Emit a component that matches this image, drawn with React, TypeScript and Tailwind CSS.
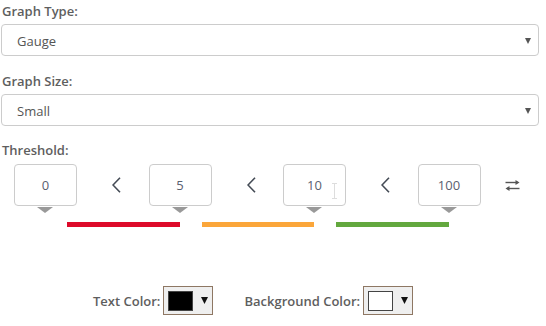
import React from "react";

const font = { fontFamily: '"Open Sans", "Liberation Sans", sans-serif' };

function SelectBox({ value }: { value: string }) {
  return (
    <div className="relative h-[32px] w-full rounded-[4px] border border-[#cccccc] bg-white flex items-center pl-[15px]">
      <span className="text-[13px] leading-[18px] text-[#555555] mt-[1px]">{value}</span>
      <svg className="absolute right-[7px] top-[13px]" width="6" height="6" viewBox="0 0 6 6">
        <polygon points="0,0 6,0 3,6" fill="#555555" />
      </svg>
    </div>
  );
}

function ThreshBox({ value, cursor }: { value: string; cursor?: boolean }) {
  return (
    <div className="relative w-[63px] h-[42px] shrink-0 rounded-[4px] border border-[#cccccc] bg-white flex items-center justify-center">
      <span className="text-[13px] leading-[18px] text-[#5a6070]">{value}</span>
      {cursor && (
        <svg className="absolute left-[47px] top-[18px]" width="7" height="16" viewBox="0 0 7 16">
          <path d="M1 0.5h5M1 15.5h5M3.5 0.5v15" stroke="#dddddd" strokeWidth="1" fill="none" />
        </svg>
      )}
      <div className="absolute left-[22px] top-[42px] w-0 h-0 border-l-[8px] border-r-[8px] border-t-[6px] border-l-transparent border-r-transparent border-t-[#999999]" />
    </div>
  );
}

function Chevron() {
  return (
    <div className="w-[71.5px] shrink-0 flex items-center pl-[35px]">
      <svg width="9" height="16" viewBox="0 0 9 16">
        <polyline points="8,0.8 1,8 8,15.2" fill="none" stroke="#444b55" strokeWidth="1.6" />
      </svg>
    </div>
  );
}

function Swatch({ color }: { color: string }) {
  return (
    <div className="w-[50px] h-[29px] border border-[#8e7763] bg-[#efefef] flex items-center pl-[4px] gap-[8px]">
      <div className="w-[25px] h-[20px] border border-[#444444]" style={{ backgroundColor: color }} />
      <svg width="7" height="7" viewBox="0 0 7 7">
        <polygon points="0,0 7,0 3.5,7" fill="#111111" />
      </svg>
    </div>
  );
}

export default function App() {
  return (
    <div className="w-[546px] h-[326px] bg-white relative overflow-hidden" style={font}>
      <div className="w-[538px] ml-[1px] pt-[2px]">
        <div className="text-[13px] leading-[18px] font-semibold text-[#5e5e5e] ml-[1px]">Graph Type:</div>
        <div className="mt-[4px]">
          <SelectBox value="Gauge" />
        </div>
        <div className="mt-[16px] text-[13px] leading-[18px] font-semibold text-[#5e5e5e] ml-[1px]">Graph Size:</div>
        <div className="mt-[4px]">
          <SelectBox value="Small" />
        </div>
        <div className="mt-[15px] text-[13px] leading-[18px] font-semibold text-[#5e5e5e] ml-[1px]">Threshold:</div>
      </div>

      <div className="mt-[5px] flex items-center pl-[14px]">
        <ThreshBox value="0" />
        <Chevron />
        <ThreshBox value="5" />
        <Chevron />
        <ThreshBox value="10" cursor />
        <Chevron />
        <ThreshBox value="100" />
        <div className="pl-[24px] flex items-center">
          <svg width="15" height="11" viewBox="0 0 15 11">
            <path d="M0.5 2.5h12.5" stroke="#555555" strokeWidth="1.4" />
            <polygon points="14.5,2.5 10.5,0 10.5,5" fill="#555555" />
            <path d="M2 8.5h12.5" stroke="#555555" strokeWidth="1.4" />
            <polygon points="0.5,8.5 4.5,6 4.5,11" fill="#555555" />
          </svg>
        </div>
      </div>

      <div className="mt-[16px] flex pl-[67px] gap-[22px]">
        <div className="w-[113px] h-[5px] bg-[#dd0a2a]" />
        <div className="w-[112px] h-[5px] bg-[#fba63a]" />
        <div className="w-[113px] h-[5px] bg-[#63a83e]" />
      </div>

      <div className="mt-[59px] flex items-center pl-[93px]">
        <span className="text-[13px] leading-[18px] font-semibold text-[#5e5e5e] mr-[3px]">Text Color:</span>
        <Swatch color="#000000" />
        <span className="ml-[31px] text-[13px] leading-[18px] font-semibold text-[#5e5e5e] mr-[3px]">Background Color:</span>
        <Swatch color="#ffffff" />
      </div>
    </div>
  );
}
